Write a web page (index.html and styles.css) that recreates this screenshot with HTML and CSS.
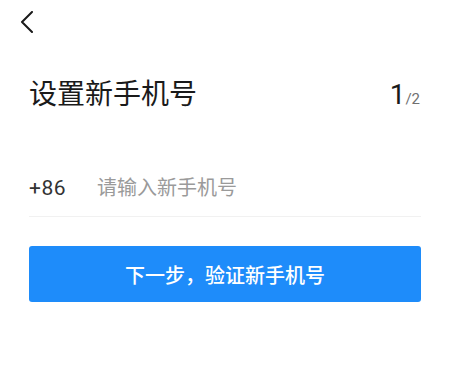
FILE: index.html
```html
<!DOCTYPE html>
<html lang="zh-CN">
<head>
<meta charset="utf-8">
<title>设置新手机号</title>
<link rel="stylesheet" href="styles.css">
</head>
<body>
<div class="page">
  <header class="nav">
    <button class="back" aria-label="返回">
      <svg width="14" height="22" viewBox="0 0 14 22"><path d="M12 1 L2 11 L12 21" fill="none" stroke="#1a1a1a" stroke-width="2" stroke-linecap="round" stroke-linejoin="round"/></svg>
    </button>
  </header>
  <div class="title-row">
    <h1 class="title">设置新手机号</h1>
    <div class="step"><span class="step-cur">1</span><span class="step-total">/2</span></div>
  </div>
  <div class="phone-row">
    <span class="code">+86</span>
    <input class="phone-input" type="tel" placeholder="请输入新手机号">
  </div>
  <button class="next">下一步，验证新手机号</button>
</div>
</body>
</html>
```

FILE: styles.css
```css
* { box-sizing: border-box; }
html, body { margin: 0; padding: 0; background: #fff; }
body {
  font-family: "Roboto", "Noto Sans CJK SC", sans-serif;
  color: #1a1a1a;
}
.page {
  width: 450px;
  height: 388px;
  padding: 0 29px;
}
.nav {
  height: 44px;
  display: flex;
  align-items: flex-start;
}
.back {
  margin: 11px 0 0 -9px;
  padding: 0;
  border: none;
  background: none;
  width: 14px;
  height: 22px;
  display: block;
}
.back svg { display: block; }
.title-row {
  margin-top: 31px;
  height: 40px;
  display: flex;
  justify-content: space-between;
  align-items: baseline;
}
.title {
  margin: 0;
  font-size: 28px;
  font-weight: 400;
  line-height: 40px;
  color: #1a1a1a;
}
.step { line-height: 40px; margin-right: 1px; }
.step-cur { font-size: 28px; color: #1a1a1a; }
.step-total { font-size: 15px; color: #707070; }
.phone-row {
  margin-top: 45px;
  height: 57px;
  display: flex;
  align-items: center;
  border-bottom: 1px solid #f1f1f1;
}
.code {
  width: 68px;
  flex: none;
  font-size: 21px;
  letter-spacing: 0.5px;
  color: #333;
}
.phone-input {
  flex: 1;
  min-width: 0;
  border: none;
  outline: none;
  padding: 0;
  font-family: inherit;
  font-size: 20px;
  color: #333;
  background: transparent;
}
.phone-input::placeholder { color: #9a9a9a; }
.next {
  margin-top: 29px;
  width: 100%;
  height: 56px;
  border: none;
  border-radius: 3px;
  background: #1e8cfa;
  color: #fff;
  font-family: inherit;
  font-size: 20px;
  font-weight: 500;
  display: block;
}
```
